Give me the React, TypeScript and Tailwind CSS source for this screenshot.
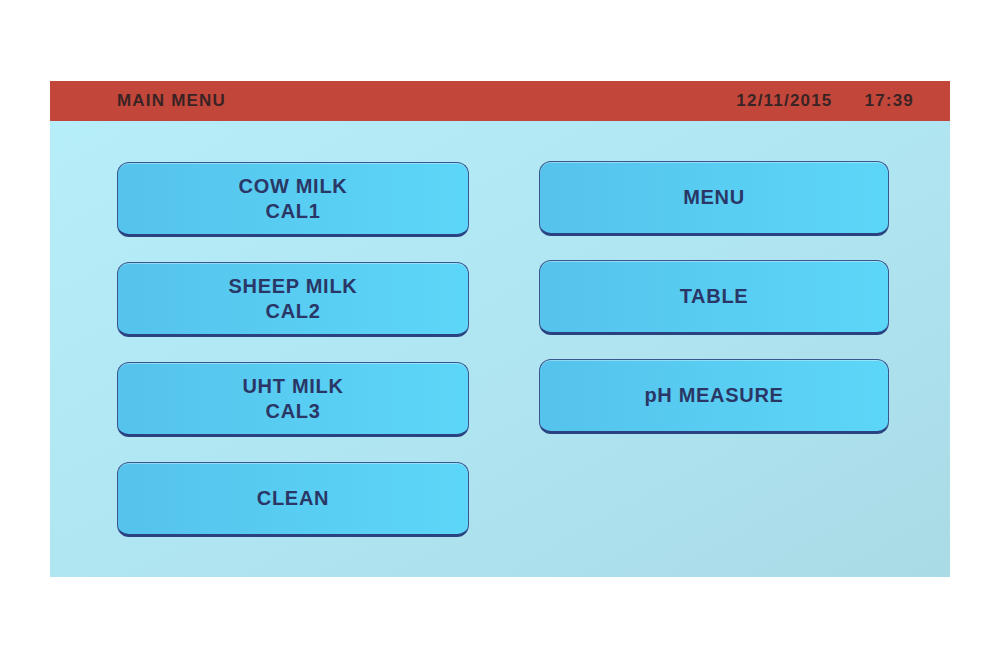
import React from 'react';

const left = [
  ['COW MILK', 'CAL1'],
  ['SHEEP MILK', 'CAL2'],
  ['UHT MILK', 'CAL3'],
  ['CLEAN'],
];

const right = [['MENU'], ['TABLE'], ['pH MEASURE']];

function MenuButton({ lines }: { lines: string[] }) {
  return (
    <button className="h-[75px] w-full rounded-[12px] border border-[#3a5590] border-b-[3px] border-b-[#2a4380] bg-gradient-to-r from-[#55c3ec] to-[#5cd6f8] shadow-[inset_0_1px_0_rgba(255,255,255,0.35)] flex flex-col items-center justify-center text-[#2a3766] text-[20px] font-bold leading-[25px] tracking-[0.7px]">
      {lines.map((l) => (
        <span key={l}>{l}</span>
      ))}
    </button>
  );
}

export default function App() {
  return (
    <div className="w-[1000px] h-[657px] bg-white pt-[81px] pl-[50px]" style={{ fontFamily: '"Liberation Sans", Arial, sans-serif' }}>
      <div className="w-[900px] h-[496px] flex flex-col bg-gradient-to-br from-[#b6eef9] via-[#b0e6f2] to-[#a9dbe6]">
        {/* Barra superior */}
        <div className="h-[40px] bg-[#c2473a] flex items-center pl-[67px] pr-[36px] text-[17px] font-bold tracking-[1.2px] text-[#3a2324]">
          <span className="flex-1">MAIN MENU</span>
          <span>12/11/2015</span>
          <span className="ml-[32px]">17:39</span>
        </div>

        {/* Botones */}
        <div className="flex pl-[67px] pt-[41px] gap-[70px]">
          <div className="w-[352px] flex flex-col gap-[25px]">
            {left.map((l, i) => (
              <MenuButton key={i} lines={l} />
            ))}
          </div>
          <div className="w-[350px] flex flex-col gap-[24px] -mt-[1px]">
            {right.map((l, i) => (
              <MenuButton key={i} lines={l} />
            ))}
          </div>
        </div>
      </div>
    </div>
  );
}
